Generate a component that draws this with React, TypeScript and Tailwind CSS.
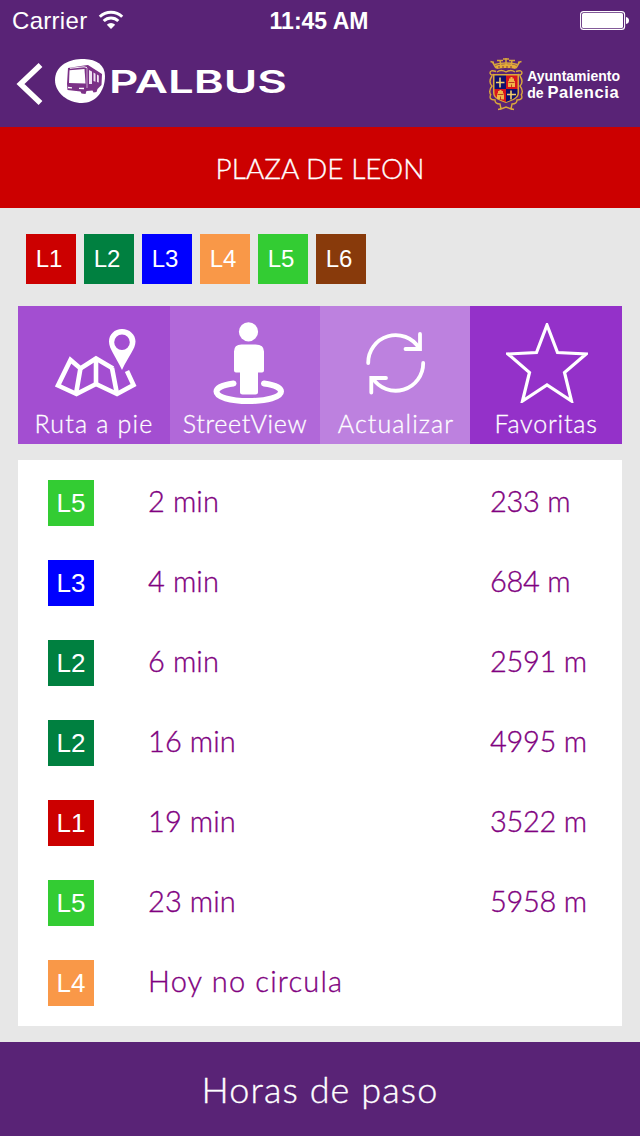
import React from 'react';

type LineId = 'L1' | 'L2' | 'L3' | 'L4' | 'L5' | 'L6';

interface Arrival {
  line: LineId;
  time: string;
  distance?: string;
}

const lineColors: Record<LineId, string> = {
  L1: 'bg-[#cc0000]',
  L2: 'bg-[#008040]',
  L3: 'bg-[#0000ff]',
  L4: 'bg-[#f99848]',
  L5: 'bg-[#33cc33]',
  L6: 'bg-[#883a0b]'
};

const lines: LineId[] = ['L1', 'L2', 'L3', 'L4', 'L5', 'L6'];

const arrivals: Arrival[] = [
  { line: 'L5', time: '2 min', distance: '233 m' },
  { line: 'L3', time: '4 min', distance: '684 m' },
  { line: 'L2', time: '6 min', distance: '2591 m' },
  { line: 'L2', time: '16 min', distance: '4995 m' },
  { line: 'L1', time: '19 min', distance: '3522 m' },
  { line: 'L5', time: '23 min', distance: '5958 m' },
  { line: 'L4', time: 'Hoy no circula' }
];

function WifiIcon() {
  return (
    <svg width="26" height="20" viewBox="0 0 26 20" fill="none" stroke="white" strokeWidth="3">
      <path d="M1.8 6.7a16 16 0 0 1 22.4 0" />
      <path d="M5.7 11a10.5 10.5 0 0 1 14.6 0" />
      <path d="M13 19l-4.2-4.2a6 6 0 0 1 8.4 0z" fill="white" stroke="none" />
    </svg>
  );
}

function BatteryIcon() {
  return (
    <svg width="50" height="20" viewBox="0 0 50 20">
      <rect x="0.6" y="1.6" width="44" height="17.8" rx="3" fill="none" stroke="white" strokeWidth="1.1" />
      <rect x="2" y="3" width="41" height="15" rx="1.5" fill="white" />
      <path d="M46 7q3 .5 3 3.500t-3 3.500z" fill="white" />
    </svg>
  );
}

function BusLogo() {
  return (
    <svg width="234" height="46" viewBox="0 0 234 46">
      <path d="M0 21C0 8 12 .5 26 0 40-.5 50 5 50 17c0 16-10 27-23 27C13 44 0 34 0 21z" fill="white" />
      <path d="M13 9l16-2.500 4-.5 14 9-.5 11-4 4-1 3-3 .5-1-2-6 .5-1 3-4-.5-1-2-13-1.500-.5-6z" fill="#7c3187" />
      <path d="M14.500 11.200l15-1.200 1 14.500-16.500-.5z" fill="white" />
      <path d="M15 9.300l14-1.500 3 .8" fill="none" stroke="white" strokeWidth=".9" />
      <path d="M34 11l3 1.600v12.500L34 25zM38.500 13.500l2 1.200v8l-2-.6zM42 15.500l1.800 1.100v7L42 23z" fill="#f0e2f3" />
      <path d="M13 28.500l4 .3M24 29.300l5 .2" stroke="white" strokeWidth="1.300" />
      <path d="M32 9v20" stroke="#d9bddd" strokeWidth=".8" />
      <text
        x="54"
        y="33.500"
        fill="white"
        fontFamily="Inter, sans-serif"
        fontWeight="600"
        fontSize="31.500"
        textLength="178"
        lengthAdjust="spacingAndGlyphs"
      >
        PALBUS
      </text>
    </svg>
  );
}

function CoatOfArms() {
  return (
    <svg width="36" height="56" viewBox="0 0 36 56">
      <g fill="none" stroke="#d9a73c" strokeWidth="1.500">
        <path d="M8 12L4.500 6M13 11l-1-7M18 11V2M23 11l1-7M28 12l3.500-6" />
        <path d="M2.500 5.500l3.500 1M9 4.500h6M15 3h6M21 4.500h6M30 6.500l3.500-1M6.500 8.500q11.500-3 23 0" />
      </g>
      <path d="M7.500 9.500q10.500-3 21 0l-1 3.500q-9.500-2-19 0z" fill="#e6ac36" />
      <path d="M10 11h16" stroke="#7c3a3c" strokeWidth="1" strokeDasharray="2 2" />
      <path
        d="M8 15.500q-6-2-6 1.500 1 3 4 1.500M28 15.500q6-2 6 1.500-1 3-4 1.500M9 16q4-3 9 0 5-3 9 0M4 20q-4 6 0 10-4 5-1 9M32 20q4 6 0 10 4 5 1 9M3 38q-3 6 4 6 0 4 5 4l1 5 5-2 5 2 1-5q5 0 5-4 7 0 4-6M10 53.500l4-1M26 53.500l-4-1"
        fill="none"
        stroke="#d9a73c"
        strokeWidth="1.400"
      />
      <path d="M5 18h26v19c0 6-8 8-13 10-5-2-13-4-13-10z" fill="#d9a73c" />
      <path d="M6.500 19.500H18v13.500H6.500z" fill="#10106e" />
      <path d="M18 19.500h11.500v13.500H18z" fill="#d9141c" />
      <path d="M6.500 33H18v13c-5-2-11.500-4-11.500-9z" fill="#d9141c" />
      <path d="M18 33h11.500v4c0 5-6.500 7-11.500 9z" fill="#10106e" />
      <path d="M12 21.500v10M8 26.500h8.500M23 34.500v9M19 38.500h9" stroke="#f3cf6b" strokeWidth="1.600" />
      <path d="M20 31v-5.500l1-1v-2h1.500V21h2v1.500H26v2l1 1V31z" fill="#f0b648" />
      <path d="M9 43v-5l1-1v-2h1.500v-1h2v1H15v2l1 1v5.500z" fill="#f0b648" />
      <path d="M20.500 26.500h6M23.500 28.500V31M9.500 38.500h6M12.500 40.500V44" stroke="#b3321c" strokeWidth=".9" />
    </svg>
  );
}

function MapIcon() {
  return (
    <svg width="84" height="70" viewBox="0 0 84 70" fill="none" stroke="white" strokeWidth="4.600">
      <path d="M59 40.500L42 30.500l-15.500 10-10-8.500L4 57.500 22.500 66 42 56l21 10 16.500-9L73 43" />
      <path d="M26.500 40L22 66M42 31v26M58 40l5 26" />
      <path
        d="M68 1C60.500 1 55 6.500 55 13.500 55 21 61.500 28 68 42c6.500-14 13.500-21 13.500-28.500C81.500 6.500 75.500 1 68 1zm0 5.500a7.800 7.800 0 1 1 0 15.600 7.800 7.800 0 0 1 0-15.600z"
        fill="white"
        fillRule="evenodd"
        stroke="none"
      />
    </svg>
  );
}

function StreetViewIcon() {
  return (
    <svg width="72" height="84" viewBox="0 0 72 84" fill="white">
      <circle cx="35.500" cy="9.800" r="9.600" />
      <path d="M28.500 22.500h14q8.500 0 8.500 7v19q0 2-2 2h-4v20q0 2-2.500 2h-13q-2.500 0-2.500-2v-20h-4q-2 0-2-2v-19q0-7 7.500-7z" />
      <path
        d="M20.500 61.500C9 63 3.500 66 3.500 69.500 3.500 75 17 79 35.500 79s32.500-4 32.500-9.500c0-3.500-5.500-6.500-17-8"
        fill="none"
        stroke="white"
        strokeWidth="6"
        strokeLinecap="round"
      />
    </svg>
  );
}

function RefreshIcon() {
  return (
    <svg width="62" height="64" viewBox="0 0 62 64" fill="none" stroke="white" strokeWidth="3.800" strokeLinecap="round">
      <path d="M3.200 32A27.500 27.500 0 0 1 54 17" />
      <path d="M55 3v15H40.500" />
      <path d="M58.200 32A27.500 27.500 0 0 1 7.500 47" />
      <path d="M6.300 61.500V47H21" />
    </svg>
  );
}

// the viewBox trims the mitred tips flat
function StarIcon() {
  return (
    <svg width="82" height="80" viewBox="1 2 82 80" fill="none" stroke="white" strokeWidth="3.200">
      <path d="M42 4l10.500 27.500L81 33 59.500 51.500 66.500 80 42 64 17.500 80l7-28.500L3 33l28.500-1.500z" />
    </svg>
  );
}

const actions = [
  { label: 'Ruta a pie', icon: <MapIcon />, tile: 'w-[152px] bg-[#a34ed1]', art: 'pl-1 pt-[22px]', text: 'tracking-[1.2px]' },
  { label: 'StreetView', icon: <StreetViewIcon />, tile: 'w-[150px] bg-[#b168d9]', art: 'pl-[7px] pt-4', text: 'tracking-[0.7px]' },
  { label: 'Actualizar', icon: <RefreshIcon />, tile: 'w-[150px] bg-[#bd81df]', art: 'pl-[2px] pt-[25px]', text: 'pl-[2px] tracking-[1.1px]' },
  { label: 'Favoritas', icon: <StarIcon />, tile: 'w-[152px] bg-[#9431c9]', art: 'pl-[2px] pt-[17px]', text: 'tracking-[0.8px]' }
];

function StatusBar() {
  return (
    <div className="grid h-10 grid-cols-3 items-center pl-3 pr-[10px] font-['Liberation_Sans',sans-serif]">
      <div className="flex items-center gap-[11px] text-[24px]">
        <span className="pt-[2px] tracking-[0.3px]">Carrier</span>
        <WifiIcon />
      </div>
      <span className="whitespace-nowrap pr-1 pt-[2px] text-center text-[23px] font-bold">11:45 AM</span>
      <div className="flex justify-end">
        <BatteryIcon />
      </div>
    </div>
  );
}

function Header() {
  return (
    <header className="h-[127px] bg-[#592376] text-white">
      <StatusBar />
      <div className="flex justify-between pl-4 pr-5 pt-[15px]">
        <div className="flex">
          <svg width="28" height="58" viewBox="0 0 28 58" fill="none" stroke="white" strokeWidth="5.500">
            <path d="M24.500 10L4.500 29l20 19" />
          </svg>
          <div className="ml-[11px] mt-1">
            <BusLogo />
          </div>
        </div>
        <div className="flex gap-[3px] pt-[1px] font-['Liberation_Sans',sans-serif] font-bold leading-4">
          <CoatOfArms />
          <div className="pt-3">
            <p className="text-[14px]">Ayuntamiento</p>
            <p className="text-[14px]">
              de <span className="text-[16.5px] tracking-[0.6px]">Palencia</span>
            </p>
          </div>
        </div>
      </div>
    </header>
  );
}

function ArrivalRow({ arrival }: { arrival: Arrival }) {
  return (
    <li className="flex h-20 items-center pl-[30px]">
      <span
        className={`${lineColors[arrival.line]} flex h-[46px] w-[46px] items-center justify-center font-['Liberation_Sans',sans-serif] text-[26px] font-normal text-white`}
      >
        {arrival.line}
      </span>
      <span
        className={`${arrival.distance ? 'tracking-[0.1px]' : 'tracking-[1.2px]'} ml-[54px] w-[342px] pb-1 text-[29px] [-webkit-text-stroke:0.35px]`}
      >
        {arrival.time}
      </span>
      <span className="pb-1 text-[29px] tracking-[-0.3px] [-webkit-text-stroke:0.35px]">{arrival.distance}</span>
    </li>
  );
}

export default function App() {
  return (
    <div className="flex h-[1136px] w-[640px] flex-col overflow-hidden bg-[#e7e7e7] font-['Lato',sans-serif] font-light">
      <Header />
      <h1 className="flex h-[81px] items-center justify-center bg-[#cc0000] text-[28px] font-light text-white [-webkit-text-stroke:0.35px]">
        PLAZA DE LEON
      </h1>

      <main className="px-[18px]">
        <div className="flex gap-2 pl-2 pt-[26px]">
          {lines.map((line) => (
            <span
              key={line}
              className={`${lineColors[line]} flex h-[50px] w-[50px] items-center justify-center pr-1 font-['Liberation_Sans',sans-serif] text-[24px] font-normal text-white`}
            >
              {line}
            </span>
          ))}
        </div>

        <div className="mt-[22px] flex h-[138px] text-white">
          {actions.map((action) => (
            <button key={action.label} className={`${action.tile} flex flex-col items-center`}>
              <span className={`${action.art} h-[101px]`}>{action.icon}</span>
              <span className={`${action.text} whitespace-nowrap text-[25px] leading-8 [-webkit-text-stroke:0.3px]`}>
                {action.label}
              </span>
            </button>
          ))}
        </div>

        <ul className="mt-4 h-[566px] bg-white pt-[3px] text-[#800080]">
          {arrivals.map((arrival, i) => (
            <ArrivalRow key={i} arrival={arrival} />
          ))}
        </ul>
      </main>

      <footer className="mt-4 flex h-[94px] items-center justify-center bg-[#592376] text-[36px] tracking-[1.1px] text-white [-webkit-text-stroke:0.35px]">
        Horas de paso
      </footer>
    </div>
  );
}
